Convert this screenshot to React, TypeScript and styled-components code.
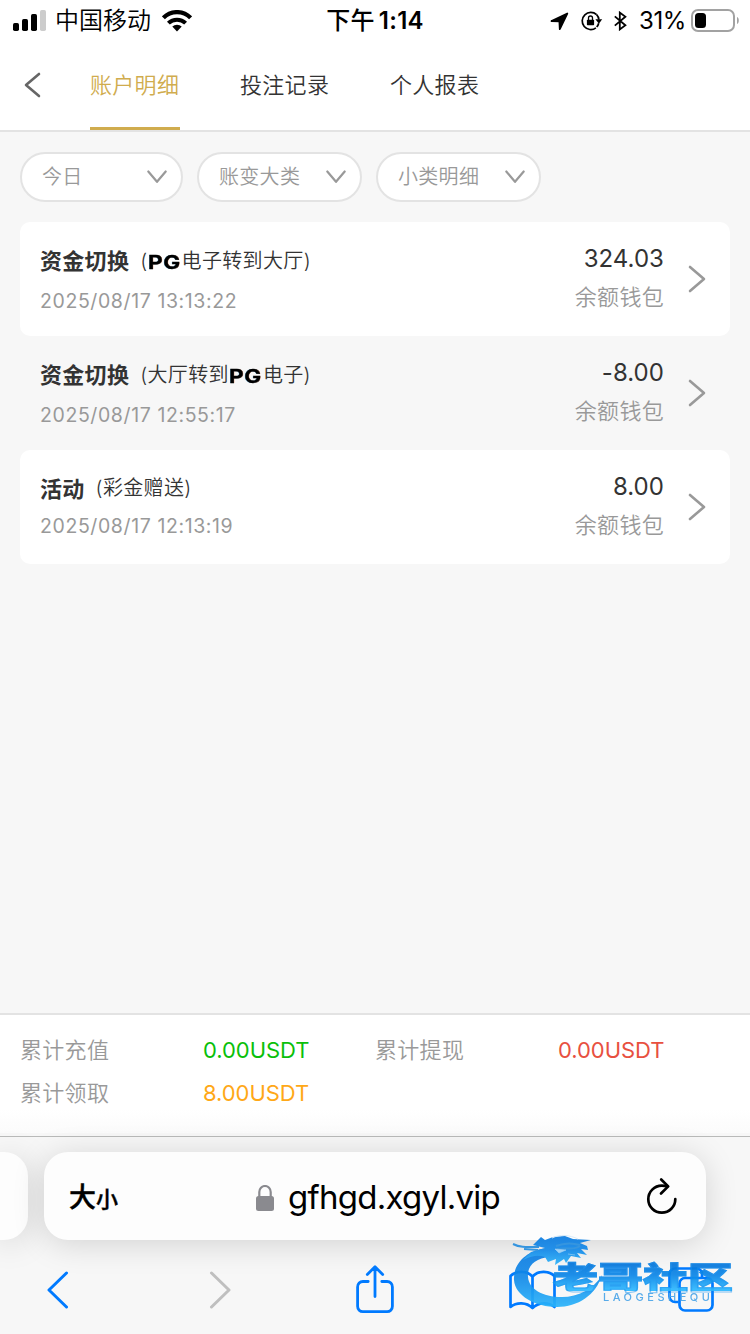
import React from "react";
import styled, { createGlobalStyle } from "styled-components";

const GlobalStyle = createGlobalStyle`
  * { box-sizing: border-box; }
  body {
    margin: 0;
    background: #f7f7f7;
    font-family: Inter, "Noto Sans CJK SC", sans-serif;
  }
  svg { display: block; flex: none; }
`;

const Screen = styled.div`
  width: 750px;
  height: 1334px;
  display: flex;
  flex-direction: column;
  overflow: hidden;
  position: relative;
  background: #f7f7f7;
`;

const StatusBar = styled.header`
  height: 40px;
  flex: none;
  display: grid;
  grid-template-columns: 250px 250px 250px;
  background: #fff;
  color: #000;
`;

const StatusLeft = styled.div`
  display: flex;
  align-items: center;
  padding-left: 13px;
`;

const Carrier = styled.span`
  font-size: 24px;
  line-height: 40px;
  font-weight: 350;
  margin: 0 11px 0 9px;
  white-space: nowrap;
`;

const Clock = styled.div`
  display: flex;
  justify-content: center;
  gap: 4px;
  font-size: 24px;
  line-height: 42px;
  font-weight: 600;
  letter-spacing: 0.3px;
`;

const Meridiem = styled.span`
  font-weight: 500;
`;

const StatusRight = styled.div`
  display: flex;
  align-items: center;
  justify-content: flex-end;
  padding-right: 11px;
`;

const StatusIcon = styled.span<{ $gap: number }>`
  margin-right: ${(p) => p.$gap}px;
`;

const Percent = styled.span`
  font-size: 24px;
  line-height: 40px;
  letter-spacing: -0.4px;
  margin: 0 5px 0 0;
`;

const NavBar = styled.nav`
  height: 92px;
  flex: none;
  display: flex;
  background: #fff;
  border-bottom: 2px solid #e3e3e3;
`;

const BackButton = styled.div`
  width: 90px;
  padding: 32px 0 0 24px;
`;

const Tab = styled.div<{ $active?: boolean }>`
  width: 90px;
  height: 90px;
  margin-right: 60px;
  font-size: 22px;
  font-weight: 350;
  letter-spacing: 0.3px;
  line-height: 91px;
  white-space: nowrap;
  color: ${(p) => (p.$active ? "#d0ac4e" : "#333")};
  background: ${(p) =>
    p.$active ? "linear-gradient(#d0ac4e, #d0ac4e) 0 100% / 100% 3px no-repeat" : "none"};
`;

const Content = styled.main`
  flex: 1;
  padding: 20px 20px 0;
`;

const Filters = styled.div`
  display: flex;
  gap: 14px;
  margin-bottom: 20px;
`;

const Select = styled.div<{ $width: number }>`
  width: ${(p) => p.$width}px;
  height: 50px;
  display: flex;
  align-items: center;
  justify-content: space-between;
  padding: 0 14px 0 20px;
  background: #fff;
  border: 2px solid #e3e3e3;
  border-radius: 25px;
  font-size: 20px;
  font-weight: 350;
  line-height: 46px;
  letter-spacing: 0.3px;
  color: #999;
`;

const Record = styled.article<{ $plain?: boolean }>`
  height: 114px;
  display: flex;
  padding: 0 24px 0 20px;
  border-radius: 10px;
  background: ${(p) => (p.$plain ? "transparent" : "#fff")};
`;

const RecordInfo = styled.div`
  flex: 1;
  padding-top: 24px;
`;

const RecordTitle = styled.div<{ $compact?: boolean }>`
  height: ${(p) => (p.$compact ? 37 : 40)}px;
  display: flex;
  align-items: flex-start;
  color: #333;
`;

const Kind = styled.strong`
  font-size: 22px;
  line-height: 30px;
  letter-spacing: 0.3px;
  font-weight: 700;
  margin-right: 11px;
`;

const Detail = styled.span<{ $compact?: boolean }>`
  display: flex;
  align-items: center;
  font-size: 20px;
  font-weight: 350;
  line-height: ${(p) => (p.$compact ? 29 : 31)}px;
  letter-spacing: 0.35px;
`;

const BrandSlot = styled.span`
  width: 34px;
  display: flex;
  justify-content: center;
`;

const Brand = styled.b`
  font-size: 18.5px;
  line-height: 30px;
  font-weight: 700;
  letter-spacing: 0.5px;
  color: #000;
  transform: scaleX(1.22);
  text-shadow: -0.4px 0.4px 0 #35b5ff88, 0.4px -0.4px 0 #ff7a3c88;
  -webkit-text-stroke: 0.3px #000;
`;

const Time = styled.time`
  display: block;
  font-size: 19.5px;
  line-height: 30px;
  letter-spacing: 0.6px;
  color: #999;
`;

const AmountColumn = styled.div`
  padding-top: 18px;
  margin-right: 24px;
  text-align: right;
`;

const Amount = styled.div`
  font-size: 24px;
  line-height: 37px;
  letter-spacing: 0.05px;
  color: #333;
`;

const Wallet = styled.div`
  font-size: 22px;
  font-weight: 350;
  line-height: 40px;
  letter-spacing: 0.3px;
  color: #999;
`;

const ArrowSlot = styled.div`
  padding-top: 43px;
`;

const Totals = styled.section`
  height: 120px;
  flex: none;
  display: grid;
  grid-template-columns: 183px 172px 183px 1fr;
  grid-template-rows: 43px 43px;
  padding: 14px 20px 0;
  background: linear-gradient(#fff 80%, #fbfbfb);
  border-top: 2px solid #e3e3e3;
  font-size: 22px;
  line-height: 43px;
  color: #999;
`;

const TotalLabel = styled.span`
  font-weight: 350;
  line-height: 43px;
  letter-spacing: 0.3px;
`;

const TotalValue = styled.span<{ $color: string }>`
  color: ${(p) => p.$color};
  letter-spacing: -0.05px;
`;

const Browser = styled.footer`
  height: 201px;
  flex: none;
  padding-top: 3px;
  background: #f7f7f7;
`;

const AddressRow = styled.div`
  height: 104px;
  display: flex;
  gap: 16px;
  padding-top: 15px;
  border-top: 1px solid #b9bab9;
`;

const PreviousTab = styled.div`
  width: 28px;
  height: 88px;
  flex: none;
  border-radius: 0 24px 24px 0;
  background: #fdfdfd;
  box-shadow: 0 4px 32px rgba(0, 0, 0, 0.15);
`;

const AddressBar = styled.div`
  width: 662px;
  height: 88px;
  flex: none;
  display: grid;
  grid-template-columns: 187px 1fr 60px;
  align-items: center;
  padding-left: 25px;
  border-radius: 24px;
  background: #fdfdfd;
  box-shadow: 0 4px 32px rgba(0, 0, 0, 0.15);
`;

const TextSize = styled.div`
  display: flex;
  align-items: baseline;
  font-weight: 500;
  font-size: 27px;
  line-height: 92px;
  color: #000;
  -webkit-text-stroke: 0.4px #000;
`;

const SmallGlyph = styled.span`
  font-size: 22px;
`;

const Site = styled.div`
  display: flex;
  align-items: center;
  gap: 14px;
  font-size: 33px;
  line-height: 86px;
  letter-spacing: -0.75px;
  color: #000;
`;

const SiteName = styled.span`
  padding-bottom: 3px;
`;

const ReloadSlot = styled.div`
  padding-bottom: 6px;
`;

const Toolbar = styled.div`
  height: 94px;
  display: grid;
  grid-template-columns: 162px 147px 153px 159px 129px;
  align-items: start;
  padding-top: 25px;
`;

const Tool = styled.div<{ $left: number; $top?: number }>`
  padding-left: ${(p) => p.$left}px;
  padding-top: ${(p) => p.$top ?? 0}px;
`;

const Watermark = styled.div`
  position: absolute;
  left: 508px;
  top: 1230px;
  width: 242px;
  height: 84px;
  opacity: 0.92;
`;

const DragonSlot = styled.div`
  position: absolute;
  left: 0;
  top: 2px;
`;

const WatermarkName = styled.div`
  position: absolute;
  left: 45px;
  top: 23px;
  font-family: "Noto Sans CJK SC", sans-serif;
  font-size: 45px;
  font-weight: 900;
  line-height: 45px;
  white-space: nowrap;
  transform: scaleY(0.69);
  color: transparent;
  background: linear-gradient(#0474da 10%, #0b87e8 50%, #2cb7ff 95%);
  background-clip: text;
  -webkit-background-clip: text;
  -webkit-text-stroke: 1.6px rgba(20, 142, 236, 0.55);
`;

const WatermarkLatin = styled.div`
  position: absolute;
  left: 95px;
  top: 62px;
  font-size: 11px;
  line-height: 10px;
  font-weight: 500;
  letter-spacing: 3.5px;
  white-space: nowrap;
  color: #4ba5e8;
`;

const Chevron = ({ w, h, d, color, stroke = 2.5 }: { w: number; h: number; d: string; color: string; stroke?: number }) => (
  <svg width={w} height={h} viewBox={`0 0 ${w} ${h}`} fill="none" stroke={color} strokeWidth={stroke} strokeLinecap="round" strokeLinejoin="round">
    <path d={d} />
  </svg>
);

const SignalIcon = () => (
  <svg width="33" height="22" viewBox="0 0 33 22">
    <rect x="0" y="13" width="6" height="8" rx="1.7" />
    <rect x="9" y="9" width="6" height="12" rx="1.7" />
    <rect x="18" y="4" width="6" height="17" rx="1.7" />
    <rect x="27" y="0" width="6" height="21" rx="1.7" fill="#ccc" />
  </svg>
);

const WifiIcon = () => (
  <svg width="30" height="23" viewBox="0 0 30 23" fill="none" stroke="#000" strokeWidth="4.2">
    <path d="M1.400 7.800a19 19 0 0 1 27.200 0" />
    <path d="M6.400 13.200a12.200 12.200 0 0 1 17.200 0" strokeWidth="4" />
    <path d="M15 21.500l-4.700-4.900a6.700 6.700 0 0 1 9.400 0z" fill="#000" stroke="none" />
  </svg>
);

const LocationIcon = () => (
  <svg width="19" height="19" viewBox="0 0 19 19" stroke="#000" strokeWidth="1.800" strokeLinejoin="round">
    <path d="M17.300 1.500L1.500 9l7.900.3.400 7.900z" />
  </svg>
);

const RotationLockIcon = () => (
  <svg width="22" height="20" viewBox="0 0 22 20">
    <path d="M15.600 3.600A8.600 8.600 0 1 0 14.900 16.900" fill="none" stroke="#000" strokeWidth="1.700" />
    <path d="M15.600 3.600a8.400 8.400 0 0 1 2.300 5M17.700 12.200a8.300 8.300 0 0 1-2 3.800" fill="none" stroke="#000" strokeWidth="1.700" />
    <path d="M14.400 8.200h6.800l-3.300 4.600z" />
    <rect x="5.900" y="8.700" width="7.200" height="5.500" rx=".7" />
    <path d="M7.500 9V7a2 2 0 0 1 4 0v2" fill="none" stroke="#000" strokeWidth="1.300" />
  </svg>
);

const BluetoothIcon = () => (
  <svg width="13" height="20" viewBox="0 0 13 20" fill="none" stroke="#000" strokeWidth="1.800" strokeLinejoin="miter">
    <path d="M.8 5.400l10.600 8.800-5.600 4.200V1.600l5.600 4.200L.8 14.600" />
  </svg>
);

const BatteryIcon = () => (
  <svg width="48" height="24" viewBox="0 0 48 24">
    <rect x="1" y="1" width="42" height="21" rx="6" fill="none" stroke="#a2a2a2" strokeWidth="2" />
    <rect x="4" y="4" width="11" height="15" rx="3.500" />
    <path d="M46 8c2.400.8 2.400 6.200 0 7z" fill="#a2a2a2" />
  </svg>
);

const LockIcon = () => (
  <svg width="18" height="27" viewBox="0 0 18 27">
    <rect x="0" y="11" width="18" height="15" rx="2.500" fill="#8a8a8f" />
    <path d="M3.300 12V7a5.700 6 0 0 1 11.400 0V12" fill="none" stroke="#8a8a8f" strokeWidth="2.200" />
  </svg>
);

const ReloadIcon = () => (
  <svg width="32" height="38" viewBox="0 0 32 38" fill="none" stroke="#000" strokeWidth="2.700" strokeLinecap="round" strokeLinejoin="round">
    <path d="M29.300 22.200a13.500 13.500 0 1 1-13.500-13.500c2 0 3.800.3 5.300.8" />
    <path d="M15.200 2.500l7 6.900-7.200 7.100" />
  </svg>
);

const ShareIcon = () => (
  <svg width="38" height="49" viewBox="0 0 38 49" fill="none" stroke="#007aff" strokeWidth="2.800" strokeLinecap="round" strokeLinejoin="round">
    <path d="M12.200 16.500H7a5.300 5.300 0 0 0-5.400 5.400v19.400A5.300 5.300 0 0 0 7 46.700h24a5.300 5.300 0 0 0 5.400-5.400V21.900a5.300 5.300 0 0 0-5.400-5.400h-5.200" />
    <path d="M19 31.500V1.800M11.300 9.500L19 1.800l7.700 7.700" />
  </svg>
);

const BookIcon = () => (
  <svg width="48" height="40" viewBox="0 0 48 40" fill="none" stroke="#007aff" strokeWidth="2.700" strokeLinejoin="round">
    <path d="M23.500 6.500C18 .3 7 .3 1.500 6v31c6-5 16-5 22 1 6-6 16-6 22-1V6C40 .3 29 .3 23.500 6.500v31" />
  </svg>
);

const TabsIcon = () => (
  <svg width="47" height="46" viewBox="0 0 47 46" fill="none" stroke="#007aff" strokeWidth="2.700">
    <path d="M10.500 35H7a5.500 5.500 0 0 1-5.500-5.500V7A5.500 5.500 0 0 1 7 1.500h21.500A5.500 5.500 0 0 1 34 7v4" />
    <rect x="11.500" y="11" width="33" height="32.500" rx="5.500" />
  </svg>
);

const DragonMark = () => (
  <svg width="108" height="82" viewBox="0 0 108 82">
    <defs>
      <linearGradient id="dragonBlue" x1="0" y1="0" x2="0" y2="1">
        <stop offset="0" stopColor="#0b7be0" />
        <stop offset=".5" stopColor="#138ae9" />
        <stop offset="1" stopColor="#2ab4fb" />
      </linearGradient>
    </defs>
    <g fill="url(#dragonBlue)">
      <path d="M40 16C17 18 5 33 6 48c1 16 22 27 43 27 21 0 39-12 45-32-8 14-24 22-40 22-20 0-33-8-34-20-1-11 7-19 22-20z" />
      <path d="M25 13l12 3-14 4-8 8c10-5 16-5 22-3l3 5 8-3-1 6 9-6 2 4 5-7 10 2-4-5 10 2-6-6 7 1-1-4-7-3 11-3-18-1-8-3-12 1-8 3-4-3z" />
    </g>
    <path d="M5 12c8 4 15 3 26 3M16 17l14 1M48 14c10-4 17-3 24-1M49 17c11-2 16 2 23-3" fill="none" stroke="#278fdf" strokeWidth="2" />
    <path d="M47 17l11 1-7 3zM60 22l7 1" fill="#9bd0f6" stroke="#9bd0f6" strokeWidth=".6" />
    <path d="M44 6c8-4 18-3 26 1" fill="none" stroke="#d5e9f8" strokeWidth="1" />
  </svg>
);

const PG = () => (
  <BrandSlot>
    <Brand>PG</Brand>
  </BrandSlot>
);

const filters = [
  { label: "今日", width: 163 },
  { label: "账变大类", width: 165 },
  { label: "小类明细", width: 165 },
];

const records = [
  { kind: "资金切换", detail: <>(<PG />电子转到大厅)</>, time: "2025/08/17 13:13:22", amount: "324.03" },
  { kind: "资金切换", detail: <>(大厅转到<PG />电子)</>, time: "2025/08/17 12:55:17", amount: "-8.00", plain: true },
  { kind: "活动", detail: <>(彩金赠送)</>, time: "2025/08/17 12:13:19", amount: "8.00", compact: true },
];

const totals = [
  { label: "累计充值", value: "0.00USDT", color: "#0abf0a" },
  { label: "累计提现", value: "0.00USDT", color: "#e8503f" },
  { label: "累计领取", value: "8.00USDT", color: "#ffa817" },
];

export default function App() {
  return (
    <Screen>
      <GlobalStyle />
      <StatusBar>
        <StatusLeft>
          <SignalIcon />
          <Carrier>中国移动</Carrier>
          <WifiIcon />
        </StatusLeft>
        <Clock>
          <Meridiem>下午</Meridiem>
          <span>1:14</span>
        </Clock>
        <StatusRight>
          <StatusIcon $gap={12}>
            <LocationIcon />
          </StatusIcon>
          <StatusIcon $gap={11}>
            <RotationLockIcon />
          </StatusIcon>
          <StatusIcon $gap={12}>
            <BluetoothIcon />
          </StatusIcon>
          <Percent>31%</Percent>
          <BatteryIcon />
        </StatusRight>
      </StatusBar>

      <NavBar>
        <BackButton>
          <Chevron w={18} h={26} d="M15 2L2 13l13 11" color="#666" stroke={2.6} />
        </BackButton>
        <Tab $active>账户明细</Tab>
        <Tab>投注记录</Tab>
        <Tab>个人报表</Tab>
      </NavBar>

      <Content>
        <Filters>
          {filters.map((f) => (
            <Select key={f.label} $width={f.width}>
              {f.label}
              <Chevron w={20} h={14} d="M1.300 1.500L10 11.800l8.700-10.300" color="#999" stroke={2.2} />
            </Select>
          ))}
        </Filters>
        {records.map((r) => (
          <Record key={r.time} $plain={r.plain}>
            <RecordInfo>
              <RecordTitle $compact={r.compact}>
                <Kind>{r.kind}</Kind>
                <Detail $compact={r.compact}>{r.detail}</Detail>
              </RecordTitle>
              <Time>{r.time}</Time>
            </RecordInfo>
            <AmountColumn>
              <Amount>{r.amount}</Amount>
              <Wallet>余额钱包</Wallet>
            </AmountColumn>
            <ArrowSlot>
              <Chevron w={18} h={28} d="M2 2l14 12L2 26" color="#999" stroke={2.6} />
            </ArrowSlot>
          </Record>
        ))}
      </Content>

      <Totals>
        {totals.map((t) => (
          <React.Fragment key={t.label}>
            <TotalLabel>{t.label}</TotalLabel>
            <TotalValue $color={t.color}>{t.value}</TotalValue>
          </React.Fragment>
        ))}
      </Totals>

      <Browser>
        <AddressRow>
          <PreviousTab />
          <AddressBar>
            <TextSize>
              大<SmallGlyph>小</SmallGlyph>
            </TextSize>
            <Site>
              <LockIcon />
              <SiteName>gfhgd.xgyl.vip</SiteName>
            </Site>
            <ReloadSlot>
              <ReloadIcon />
            </ReloadSlot>
          </AddressBar>
        </AddressRow>
        <Toolbar>
          <Tool $left={47} $top={6}>
            <Chevron w={22} h={38} d="M19.500 2L2 19l17.500 17" color="#007aff" stroke={3} />
          </Tool>
          <Tool $left={47} $top={6}>
            <Chevron w={22} h={38} d="M2.500 2L20 19 2.500 36" color="#bfbfbf" stroke={3} />
          </Tool>
          <Tool $left={47}>
            <ShareIcon />
          </Tool>
          <Tool $left={47} $top={5}>
            <BookIcon />
          </Tool>
          <Tool $left={47} $top={2}>
            <TabsIcon />
          </Tool>
        </Toolbar>
      </Browser>

      <Watermark>
        <DragonSlot>
          <DragonMark />
        </DragonSlot>
        <WatermarkName>老哥社区</WatermarkName>
        <WatermarkLatin>LAOGESHEQU</WatermarkLatin>
      </Watermark>
    </Screen>
  );
}
